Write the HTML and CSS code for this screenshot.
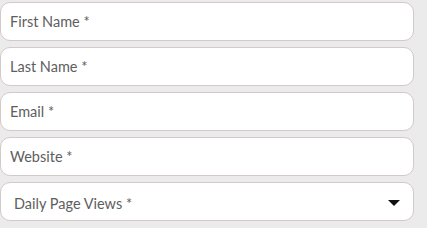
FILE: index.html
```html
<!DOCTYPE html>
<html lang="en">
<head>
    <meta charset="UTF-8">
    <title>Signup</title>
    <link rel="stylesheet" href="styles.css">
</head>
<body>
    <form class="signup-form">
        <input type="text" class="field" placeholder="First Name *">
        <input type="text" class="field" placeholder="Last Name *">
        <input type="text" class="field" placeholder="Email *">
        <input type="text" class="field" placeholder="Website *">
        <div class="select-wrap">
            <select class="field field-select">
                <option>Daily Page Views *</option>
            </select>
            <span class="select-arrow"></span>
        </div>
    </form>
</body>
</html>
```

FILE: styles.css
```css
body {
    margin: 0;
    background-color: #ebebeb;
    font-family: Lato, 'Open Sans', sans-serif;
}

.signup-form {
    width: 414px;
    padding-top: 2px;
    display: flex;
    flex-direction: column;
    gap: 6px;
}

.field {
    display: block;
    width: 100%;
    height: 39px;
    box-sizing: border-box;
    padding: 0 9px;
    border: 1px solid #d3c8ca;
    border-radius: 10px;
    background: white;
    font-family: Lato, 'Open Sans', sans-serif;
    font-size: 14.5px;
    color: #5e5e5e;
    outline: none;
}

.field::placeholder {
    color: #5e5e5e;
}

.select-wrap {
    position: relative;
}

.field-select {
    appearance: none;
    -webkit-appearance: none;
    padding: 4px 0 0 13px;
}

.select-arrow {
    position: absolute;
    right: 14px;
    top: 18px;
    width: 0;
    height: 0;
    border-left: 6px solid transparent;
    border-right: 6px solid transparent;
    border-top: 6px solid #111;
    pointer-events: none;
}
```
